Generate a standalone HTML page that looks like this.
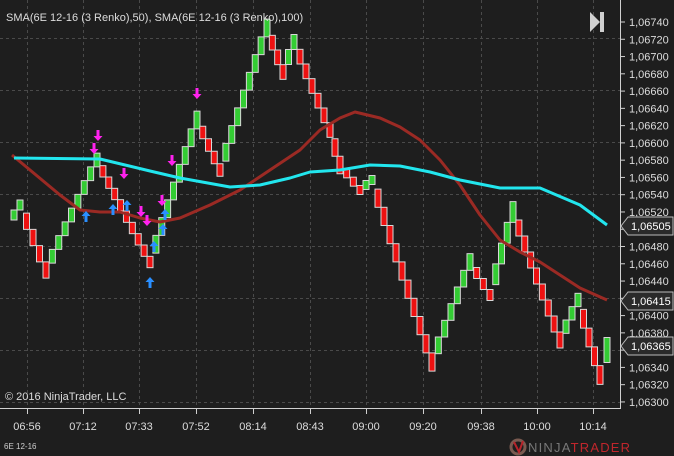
<!DOCTYPE html>
<html><head><meta charset="utf-8"><style>
body{margin:0;background:#1e1e1e;width:674px;height:456px;overflow:hidden;font-family:"Liberation Sans",sans-serif}
svg{position:absolute;left:0;top:0}
</style></head><body>
<svg id="s" width="674" height="456" xmlns="http://www.w3.org/2000/svg">
<rect width="674" height="456" fill="#1e1e1e"/>
<g id="grid" stroke="#4a4a4a" stroke-dasharray="3,3" stroke-width="1"></g>
<g id="bricks"></g>
<polyline id="red" fill="none" stroke="#9b2a24" stroke-width="3" stroke-linejoin="round"/>
<polyline id="cyan" fill="none" stroke="#22e6ee" stroke-width="3" stroke-linejoin="round"/>
<g id="arrows"></g>
<line x1="620.5" y1="0" x2="620.5" y2="408" stroke="#d0d0d0"/>
<line x1="0" y1="408.5" x2="621" y2="408.5" stroke="#d0d0d0"/>
<g id="axis" fill="#dcdcdc" font-size="11"></g>
<text x="6" y="21" fill="#dcdcdc" font-size="11">SMA(6E 12-16 (3 Renko),50), SMA(6E 12-16 (3 Renko),100)</text>
<path d="M590 12 L600 22 L590 32 Z" fill="#d0d0d0"/><rect x="600" y="12" width="4" height="20" fill="#d0d0d0"/>
<text x="5" y="400" fill="#dcdcdc" font-size="11">© 2016 NinjaTrader, LLC</text>
<text x="4" y="449" fill="#cfcfcf" font-size="8">6E 12-16</text>
<circle cx="518" cy="447" r="7" fill="none" stroke="#7a5a50" stroke-width="3"/>
<path d="M514 442 L519 452 L523 441" fill="none" stroke="#b8232a" stroke-width="2"/>
<text x="528" y="452" font-size="13" letter-spacing="1.2" fill="#777">NINJA<tspan fill="#c0262c">TRADER</tspan></text>
</svg>
<script>
var NS="http://www.w3.org/2000/svg";
function el(p,t,a,txt){var e=document.createElementNS(NS,t);for(var k in a)e.setAttribute(k,a[k]);if(txt)e.textContent=txt;document.getElementById(p).appendChild(e);return e;}
[38,90,142,194,246,298,350,402].forEach(function(y){el("grid","line",{x1:0,y1:y+.5,x2:620,y2:y+.5});});
var xs=[27,83,139,196,253,310,366,423,481,537,593],ts=["06:56","07:12","07:33","07:52","08:14","08:43","09:00","09:20","09:38","10:00","10:14"];
xs.forEach(function(x,i){el("grid","line",{x1:x+.5,y1:0,x2:x+.5,y2:408});
el("axis","line",{x1:x+.5,y1:408,x2:x+.5,y2:414,stroke:"#d0d0d0"});
el("axis","text",{x:x,y:430,"text-anchor":"middle"},ts[i]);});
for(var i=0;i<=22;i++){var p=740-i*20,y=22+i*17.27;
el("axis","line",{x1:620,y1:y,x2:625,y2:y,stroke:"#d0d0d0"});
el("axis","text",{x:629,y:y+4},"1,06"+p);}
[[226,"1,06505"],[301,"1,06415"],[346,"1,06365"]].forEach(function(a){
el("axis","path",{d:"M621 "+a[0]+" L628 "+(a[0]-9)+" L673 "+(a[0]-9)+" L673 "+(a[0]+9)+" L628 "+(a[0]+9)+" Z",fill:"#2a2a2a",stroke:"#bbb"});
el("axis","text",{x:631,y:a[0]+4,fill:"#fff"},a[1]);});
var wp=[[14,215],[20,205],[46,270],[97,160],[150,262],[197,120],[220,170],[267,28],[283,72],[294,42],[330,130],[340,165],[360,190],[372,180],[432,362],[470,262],[490,295],[513,212],[560,340],[578,300],[600,375],[607,350]];
var W=6;
for(var k=0;k<wp.length-1;k++){var a=wp[k],b=wp[k+1];var n=Math.max(1,Math.round((b[0]-a[0])/6.2));
var up=b[1]<a[1];var h=Math.max(9,Math.abs(b[1]-a[1])/n);
for(var j=(k==0?0:1);j<=n;j++){var x=a[0]+(b[0]-a[0])*j/n,y=a[1]+(b[1]-a[1])*j/n;
el("bricks","rect",{x:x-W/2,y:y-h/2,width:W,height:h,fill:up?"#33cc33":"#ee1111",stroke:"#d8d8d8","stroke-width":1});}}
var cy=[[14,158],[100,159],[150,171],[180,178],[230,187],[260,185],[290,178],[310,172],[340,170],[370,165],[400,166],[430,172],[460,180],[500,188],[540,188],[580,205],[607,225]];
var rd=[[12,155],[30,170],[60,195],[80,210],[100,212],[120,212],[140,218],[160,222],[180,218],[210,205],[240,190],[270,170],[300,150],[320,130],[340,118],[355,112],[380,118],[400,127],[420,140],[440,160],[460,185],[480,215],[500,240],[520,252],[540,262],[560,275],[580,288],[607,300]];
document.getElementById("cyan").setAttribute("points",cy.join(" "));
document.getElementById("red").setAttribute("points",rd.join(" "));
function arr(x,y,down,c){var d=down?"M"+(x-1.5)+" "+(y-10)+" h3 v6 h3 l-4.5 5 l-4.5 -5 h3 z":"M"+(x-1.5)+" "+(y+10)+" h3 v-6 h3 l-4.5 -5 l-4.5 5 h3 z";el("arrows","path",{d:d,fill:c});}
var M="#ff22ee",B="#2a8fff";
[[98,140],[94,153],[197,98],[172,165],[124,178],[141,216],[162,205],[147,225]].forEach(function(a){arr(a[0],a[1],true,M);});
[[86,212],[113,205],[127,201],[150,278],[154,242],[163,225],[165,210]].forEach(function(a){arr(a[0],a[1],false,B);});
</script>
</body></html>
